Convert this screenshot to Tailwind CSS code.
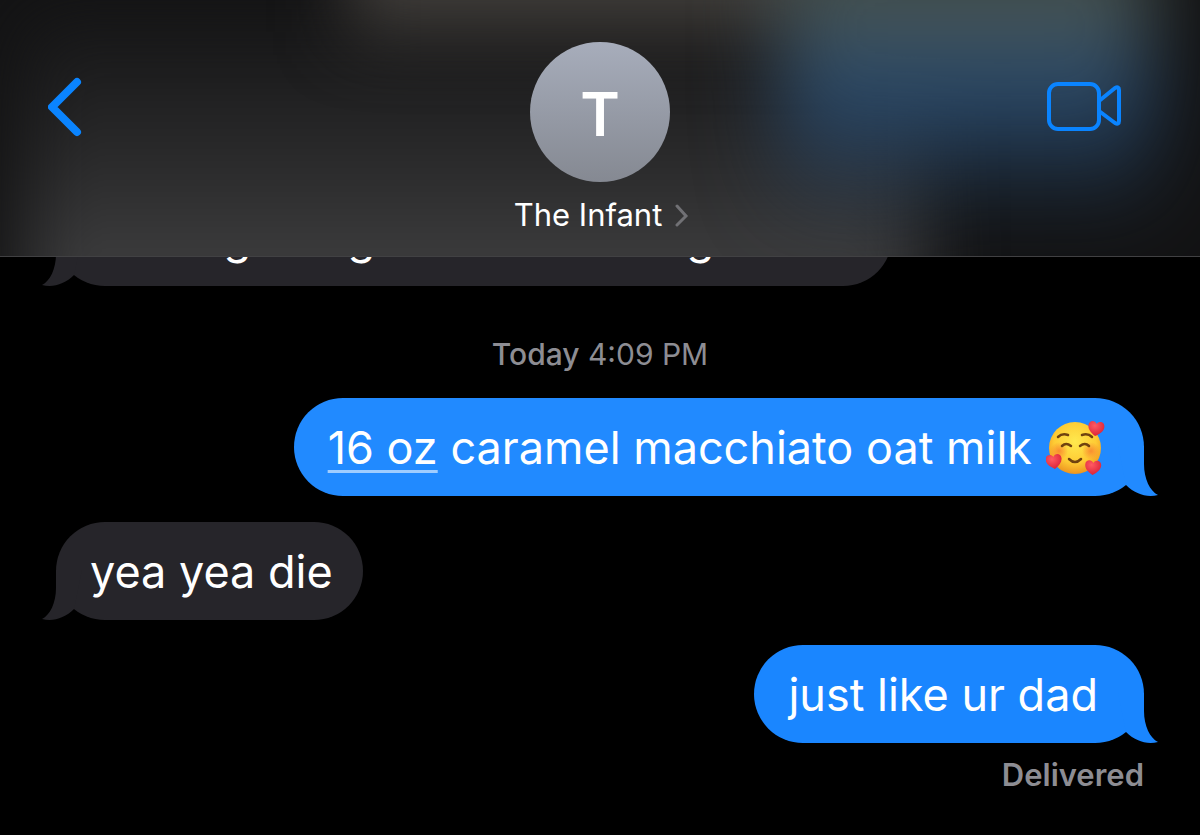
<!DOCTYPE html>
<html lang="en">
<head>
  <meta charset="UTF-8">
  <meta name="viewport" content="width=device-width, initial-scale=1.0">
  <title>Messages - The Infant</title>
  <script src="https://cdn.jsdelivr.net/npm/@tailwindcss/browser@4"></script>
</head>
<body class="min-h-screen overflow-x-hidden bg-black font-['Inter',sans-serif] text-white">
  <!-- Header -->
  <header class="relative z-10 grid grid-cols-3 items-start overflow-hidden border-b border-[#414143] bg-[#131314] px-12 pb-6 pt-10">
    <!-- Blurred content behind the bar -->
    <div class="absolute inset-0" aria-hidden="true">
      <div class="absolute -bottom-20 left-[2%] right-[23%] top-4 bg-linear-to-b from-[#161617] via-[#2a2a2b] via-45% to-[#3e3e3f] to-80% blur-[36px]"></div>
      <div class="absolute -top-24 left-[29%] right-[30%] h-32 bg-[#403d3a] blur-[34px]"></div>
      <div class="absolute -top-16 left-[65%] right-[4%] h-80 bg-linear-to-b from-[#48534f] from-20% via-[#294a6d] via-46% to-transparent to-90% blur-[40px]"></div>
    </div>
    <button type="button" aria-label="Back" class="relative mt-9 justify-self-start">
      <svg class="h-16 w-9" viewBox="0 0 36 64" fill="none" stroke="#0a84ff" stroke-width="8" stroke-linecap="round" stroke-linejoin="round">
        <path d="M29 6 4 31 29 56"/>
      </svg>
    </button>
    <button type="button" class="relative flex flex-col items-center justify-self-center">
      <span class="mt-[2px] flex size-[140px] items-center justify-center rounded-full bg-linear-to-b from-[#a7adbb] to-[#858992] pt-1 text-[60px] font-semibold">T</span>
      <span class="ml-1 mt-4 flex items-center gap-3 text-[31px] leading-[34px]">
        The Infant
        <svg class="h-6 w-4" viewBox="0 0 16 24" fill="none" stroke="#717175" stroke-width="3" stroke-linecap="round"><path d="m3 3 9 10-9 9"/></svg>
      </span>
    </button>
    <button type="button" aria-label="Video call" class="relative mr-7 mt-10 justify-self-end">
      <svg class="h-[54px] w-20" viewBox="0 0 80 54" fill="none" stroke="#0a84ff" stroke-width="4" stroke-linejoin="round">
        <rect x="5" y="4" width="50" height="45" rx="9"/>
        <path d="M55 21 71 8Q75 6 75 10V41Q75 45 71 43L55 31"/>
      </svg>
    </button>
  </header>

  <!-- Conversation, scrolled under the header -->
  <main class="-mt-[69px] flex flex-col px-14 text-[45px] leading-[56px]">
    <div class="relative flex h-[98px] w-[836px] items-center rounded-full bg-[#26252a] pl-[35px] pt-[2px]">
      <svg class="absolute -left-[14px] bottom-0 h-[50px] w-10" viewBox="0 0 40 50" fill="#26252a"><path d="M14 0V18C14 33 8 45 0 49C11 52 23 48 32 39L40 0Z"/></svg>
      <p class="flex"><span class="w-40 text-right">g</span><span class="w-[124px] text-right">g</span><span class="w-[339px] text-right">g</span></p>
    </div>

    <p class="mt-[52px] text-center text-[30px] leading-8 text-[#8d8d93]"><span class="font-medium">Today</span> 4:09 PM</p>

    <div class="relative mt-7 flex h-[98px] items-center gap-[14px] self-end rounded-full bg-[#218aff] pl-[34px] pr-[38px] pt-[2px]">
      <svg class="absolute -right-[14px] bottom-0 h-[50px] w-10 -scale-x-100" viewBox="0 0 40 50" fill="#218aff"><path d="M14 0V18C14 33 8 45 0 49C11 52 23 48 32 39L40 0Z"/></svg>
      <p><a href="#" class="underline decoration-[#a0cdff] decoration-3 underline-offset-6">16 oz</a> caramel macchiato oat milk</p>
      <svg class="h-[60px] w-[60px]" viewBox="0 0 60 60" role="img" aria-label="Smiling face with hearts">
        <defs>
          <radialGradient id="face" cx=".5" cy=".38" r=".62">
            <stop offset="0" stop-color="#ffe94e"/>
            <stop offset=".65" stop-color="#fecb34"/>
            <stop offset="1" stop-color="#ed9420"/>
          </radialGradient>
          <radialGradient id="blush">
            <stop offset="0" stop-color="#f7782f" stop-opacity=".75"/>
            <stop offset="1" stop-color="#f7782f" stop-opacity="0"/>
          </radialGradient>
          <radialGradient id="heart" cx=".4" cy=".3" r=".75">
            <stop offset="0" stop-color="#ff5a62"/>
            <stop offset="1" stop-color="#d91f35"/>
          </radialGradient>
          <path id="heart-shape" fill="url(#heart)" d="M8 15C3 12 0 9 0 5C0 0 6-1 8 3C10-1 16 0 16 5C16 9 13 12 8 15Z"/>
        </defs>
        <circle cx="29" cy="30" r="26" fill="url(#face)"/>
        <circle cx="13" cy="33" r="9" fill="url(#blush)"/>
        <circle cx="45" cy="33" r="9" fill="url(#blush)"/>
        <g fill="none" stroke="#70420f" stroke-width="2.500" stroke-linecap="round">
          <path d="M12 19Q16 15 22 17M36 17Q42 15 46 19"/>
          <path d="M16 28Q20 24 25 28M34 28Q39 24 43 28"/>
          <path d="M23 41Q29 47 35 41"/>
        </g>
        <use href="#heart-shape" transform="translate(42 3) rotate(8 8 8)"/>
        <use href="#heart-shape" transform="translate(0 36) rotate(-8 8 8)"/>
        <use href="#heart-shape" transform="translate(39 42) rotate(4 8 8)"/>
      </svg>
    </div>

    <div class="relative mt-[26px] flex h-[98px] items-center self-start rounded-full bg-[#26252a] pl-[34px] pr-[30px] pt-[2px]">
      <svg class="absolute -left-[14px] bottom-0 h-[50px] w-10" viewBox="0 0 40 50" fill="#26252a"><path d="M14 0V18C14 33 8 45 0 49C11 52 23 48 32 39L40 0Z"/></svg>
      <p>yea yea die</p>
    </div>

    <div class="relative mt-[25px] flex h-[98px] items-center self-end rounded-full bg-[#1a86ff] pl-[34px] pr-[46px] pt-[2px]">
      <svg class="absolute -right-[14px] bottom-0 h-[50px] w-10 -scale-x-100" viewBox="0 0 40 50" fill="#1a86ff"><path d="M14 0V18C14 33 8 45 0 49C11 52 23 48 32 39L40 0Z"/></svg>
      <p>just like ur dad</p>
    </div>
    <p class="mt-4 self-end text-[31px] font-semibold leading-8 text-[#8d8d93]">Delivered</p>
  </main>
</body>
</html>
